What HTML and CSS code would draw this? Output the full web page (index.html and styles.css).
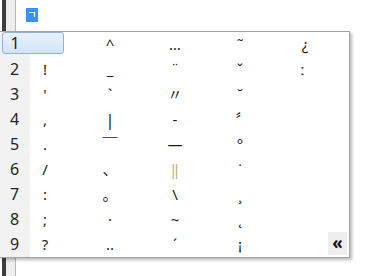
FILE: index.html
```html
<!DOCTYPE html>
<html>
<head>
<meta charset="utf-8">
<link rel="stylesheet" href="styles.css">
</head>
<body>
<div class="editor">
  <div class="gutter"><div class="bar"></div><div class="strip"></div></div>
  <div class="content">
    <span class="caret"><svg width="12" height="14" viewBox="0 0 12 14"><path d="M3 4.5H8.5V9" fill="none" stroke="#fff" stroke-width="1.2"/></svg></span>
  </div>
</div>
<div class="popup">
  <div class="numbg"></div>
  <div class="sel"></div>
  <div class="n r1">1</div><div class="c r1 c1"><span>　</span></div><div class="c r1 c2"><span>^</span></div><div class="c r1 c3"><span>…</span></div><div class="c r1 c4"><span>˜</span></div><div class="c r1 c5"><span>¿</span></div>
  <div class="n r2">2</div><div class="c r2 c1"><span>!</span></div><div class="c r2 c2"><span>_</span></div><div class="c r2 c3"><span>¨</span></div><div class="c r2 c4"><span>ˇ</span></div><div class="c r2 c5"><span class="shl">ː</span></div>
  <div class="n r3">3</div><div class="c r3 c1"><span>'</span></div><div class="c r3 c2"><span>`</span></div><div class="c r3 c3"><span>〃</span></div><div class="c r3 c4"><span>˘</span></div>
  <div class="n r4">4</div><div class="c r4 c1"><span>,</span></div><div class="c r4 c2"><span class="tall">|</span></div><div class="c r4 c3"><span>-</span></div><div class="c r4 c4"><span class="shr">〞</span></div>
  <div class="n r5">5</div><div class="c r5 c1"><span>.</span></div><div class="c r5 c2"><span>￣</span></div><div class="c r5 c3"><span>—</span></div><div class="c r5 c4"><span>°</span></div>
  <div class="n r6">6</div><div class="c r6 c1"><span>/</span></div><div class="c r6 c2"><span>、</span></div><div class="c r6 c3"><span class="tan">‖</span></div><div class="c r6 c4"><span>˙</span></div>
  <div class="n r7">7</div><div class="c r7 c1"><span>:</span></div><div class="c r7 c2"><span>。</span></div><div class="c r7 c3"><span>\</span></div><div class="c r7 c4"><span>¸</span></div>
  <div class="n r8">8</div><div class="c r8 c1"><span>;</span></div><div class="c r8 c2"><span>·</span></div><div class="c r8 c3"><span>~</span></div><div class="c r8 c4"><span>˛</span></div>
  <div class="n r9">9</div><div class="c r9 c1"><span>?</span></div><div class="c r9 c2"><span>‥</span></div><div class="c r9 c3"><span>´</span></div><div class="c r9 c4"><span>¡</span></div>
  <div class="more r9">«</div>
</div>
</body>
</html>
```
FILE: styles.css
```css
html, body {
  margin: 0;
  padding: 0;
  background: #fff;
}
body {
  width: 373px;
  height: 276px;
  overflow: hidden;
  position: relative;
  font-family: "Noto Sans", "Noto Sans CJK SC", sans-serif;
}
.editor {
  display: flex;
  height: 276px;
}
.gutter {
  display: flex;
  padding-left: 2px;
  border-right: 1px solid #b8b8b8;
}
.bar {
  width: 4px;
  background: #3e3e3e;
}
.strip {
  width: 9px;
  background: #eeeeee;
}
.content {
  flex: 1;
  padding: 8px 0 0 10px;
}
.caret {
  display: block;
  width: 12px;
  height: 14px;
  background: #3592f0;
}
.caret svg { display: block; }

.popup {
  position: absolute;
  left: -1px;
  top: 31px;
  width: 351px;
  height: 227px;
  box-sizing: border-box;
  border: 1px solid #a3a3a3;
  background: #fff;
  box-shadow: 2px 2px 3px rgba(0,0,0,0.28);
  display: grid;
  grid-template-columns: 30px 65px 65px 65px 65px 1fr;
  grid-template-rows: repeat(9, 25px);
  color: #1a1a1a;
}
.numbg {
  grid-column: 1;
  grid-row: 1 / 10;
  background: #f2f2f2;
}
.sel {
  grid-column: 1 / 3;
  grid-row: 1;
  margin: 0 31px 3px 2px;
  border: 1px solid #8fb2dc;
  border-radius: 3px;
  background: linear-gradient(#eaf2fd, #d3e4f8);
}
.n {
  grid-column: 1;
  text-align: center;
  font-size: 16px;
  line-height: 25px;
  color: #222;
  padding-right: 1px;
}
.n.r1 { line-height: 22px; padding-left: 1px; }
.c {
  font-size: 15px;
  line-height: 25px;
}
.c span {
  display: block;
  width: 30px;
  text-align: center;
}
.c span.shl { width: 25px; }
.c span.shr { width: 36px; }
.c span.tall { font-size: 17px; }
.c1 { grid-column: 2; }
.c2 { grid-column: 3; }
.c3 { grid-column: 4; }
.c4 { grid-column: 5; }
.c5 { grid-column: 6; }
.r1 { grid-row: 1; }
.r2 { grid-row: 2; }
.r3 { grid-row: 3; }
.r4 { grid-row: 4; }
.r5 { grid-row: 5; }
.r6 { grid-row: 6; }
.r7 { grid-row: 7; }
.r8 { grid-row: 8; }
.r9 { grid-row: 9; }
.tan { color: #c4a878; }
.more {
  grid-column: 6;
  justify-self: end;
  align-self: start;
  width: 19px;
  height: 23px;
  margin-right: 2px;
  background: #eeeeee;
  font-weight: bold;
  font-size: 17px;
  line-height: 21px;
  text-align: center;
  color: #111;
}
```
